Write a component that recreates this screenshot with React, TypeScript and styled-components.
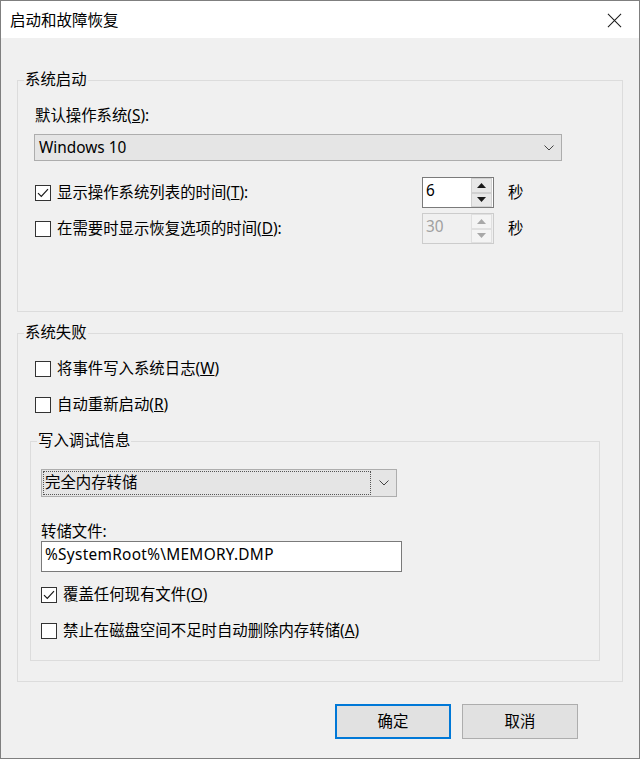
import styled, { createGlobalStyle, css } from "styled-components";

const GlobalStyle = createGlobalStyle`
    html, body {
        margin: 0;
        padding: 0;
        background: #f0f0f0;
    }
    * {
        box-sizing: border-box;
    }
`

const FONT = `"Noto Sans", "Noto Sans CJK SC", sans-serif`

export default function App() {
    return (
        <>
            <GlobalStyle />
            <Window>
                <TitleBar>
                    <Title>启动和故障恢复</Title>
                    <CloseIcon viewBox="0 0 16 16">
                        <path d="M1 1 L15 15 M15 1 L1 15" stroke="#1a1a1a" strokeWidth="1.1" fill="none" />
                    </CloseIcon>
                </TitleBar>
                <Body>
                    <GroupBox>
                        <Legend>系统启动</Legend>
                        <StartupContent>
                            <Label>默认操作系统(<u>S</u>):</Label>
                            <Combo $width={528} $height={27} $offset={-1}>
                                <ComboText>Windows 10</ComboText>
                                <Chevron />
                            </Combo>
                            <TimeRow>
                                <CheckLine $width={387}>
                                    <CheckBox checked />
                                    <span>显示操作系统列表的时间(<u>T</u>):</span>
                                </CheckLine>
                                <Spinner value="6" />
                                <Unit>秒</Unit>
                            </TimeRow>
                            <TimeRow $gap={5}>
                                <CheckLine $width={387}>
                                    <CheckBox />
                                    <span>在需要时显示恢复选项的时间(<u>D</u>):</span>
                                </CheckLine>
                                <Spinner value="30" disabled />
                                <Unit>秒</Unit>
                            </TimeRow>
                        </StartupContent>
                    </GroupBox>

                    <GroupBox $gap={11}>
                        <Legend>系统失败</Legend>
                        <FailureContent>
                            <CheckLine>
                                <CheckBox />
                                <span>将事件写入系统日志(<u>W</u>)</span>
                            </CheckLine>
                            <CheckLine $gap={16}>
                                <CheckBox />
                                <span>自动重新启动(<u>R</u>)</span>
                            </CheckLine>
                            <SubGroup>
                                <Legend>写入调试信息</Legend>
                                <DebugContent>
                                    <Combo $width={356} $height={28} $gap={0}>
                                        <FocusRect>完全内存转储</FocusRect>
                                        <Chevron />
                                    </Combo>
                                    <FileLabel>转储文件:</FileLabel>
                                    <TextInput>%SystemRoot%\MEMORY.DMP</TextInput>
                                    <CheckLine $gap={13}>
                                        <CheckBox checked />
                                        <span>覆盖任何现有文件(<u>O</u>)</span>
                                    </CheckLine>
                                    <CheckLine $gap={16}>
                                        <CheckBox />
                                        <span>禁止在磁盘空间不足时自动删除内存转储(<u>A</u>)</span>
                                    </CheckLine>
                                </DebugContent>
                            </SubGroup>
                        </FailureContent>
                    </GroupBox>
                </Body>
                <Footer>
                    <Button $primary>确定</Button>
                    <Button>取消</Button>
                </Footer>
            </Window>
        </>
    )
}

function CheckBox({ checked }: { checked?: boolean }) {
    return (
        <Box>
            {checked && (
                <svg width="14" height="14" viewBox="0 0 14 14">
                    <path d="M2 7.2 L5.3 10.5 L12 3.2" stroke="#1a1a1a" strokeWidth="1.2" fill="none" />
                </svg>
            )}
        </Box>
    )
}

function Spinner({ value, disabled }: { value: string; disabled?: boolean }) {
    const arrow = disabled ? "#a8a8a8" : "#1a1a1a"
    return (
        <SpinBox $disabled={disabled}>
            <SpinValue $disabled={disabled}>{value}</SpinValue>
            <SpinButtons>
                <SpinButton $disabled={disabled}>
                    <svg width="9" height="5" viewBox="0 0 9 5">
                        <path d="M0 5 L4.5 0 L9 5 Z" fill={arrow} />
                    </svg>
                </SpinButton>
                <SpinButton $disabled={disabled}>
                    <svg width="9" height="5" viewBox="0 0 9 5">
                        <path d="M0 0 L4.5 5 L9 0 Z" fill={arrow} />
                    </svg>
                </SpinButton>
            </SpinButtons>
        </SpinBox>
    )
}

function Chevron() {
    return (
        <ChevronBox>
            <svg width="10" height="6" viewBox="0 0 10 6">
                <path d="M0.5 0.5 L5 5 L9.5 0.5" stroke="#444" strokeWidth="1" fill="none" />
            </svg>
        </ChevronBox>
    )
}

const Window = styled.div`
    width: 640px;
    height: 759px;
    border: 1px solid #7f7f7f;
    background: #f0f0f0;
    display: flex;
    flex-direction: column;
    font-family: ${FONT};
    font-size: 15.4px;
    color: #000;
`
const TitleBar = styled.div`
    height: 37px;
    background: #fff;
    display: flex;
    align-items: center;
    justify-content: space-between;
    padding: 0 17px 0 9px;
    flex-shrink: 0;
`
const Title = styled.div`
    font-size: 15.5px;
    line-height: 20px;
`
const CloseIcon = styled.svg`
    width: 15px;
    height: 15px;
    margin-top: 1px;
`
const Body = styled.div`
    padding: 0 16px;
    margin-top: 32px;
`
const GroupBox = styled.fieldset<{ $gap?: number }>`
    margin: ${p => p.$gap ?? 0}px 0 0 0;
    padding: 0;
    min-width: 0;
    border: 1px solid #dcdcdc;
`
const SubGroup = styled(GroupBox)`
    margin: 16px 0 0 -5px;
    width: 570px;
`
const Legend = styled.legend`
    margin-left: 6px;
    padding: 0 1px;
    line-height: 20px;
`
const StartupContent = styled.div`
    padding: 16px 0 67px 17px;
    display: flex;
    flex-direction: column;
    align-items: flex-start;
`
const FailureContent = styled.div`
    padding: 16px 0 20px 17px;
    display: flex;
    flex-direction: column;
    align-items: flex-start;
`
const DebugContent = styled.div`
    padding: 18px 0 19px 10px;
    display: flex;
    flex-direction: column;
    align-items: flex-start;
`
const Label = styled.div`
    line-height: 20px;
`
const FileLabel = styled.div`
    line-height: 18px;
    margin-top: 26px;
`
const Combo = styled.div<{ $width: number; $height: number; $offset?: number; $gap?: number }>`
    width: ${p => p.$width}px;
    height: ${p => p.$height}px;
    margin-top: ${p => p.$gap ?? 8}px;
    margin-left: ${p => p.$offset ?? 0}px;
    background: #e5e5e5;
    border: 1px solid #adadad;
    display: flex;
    align-items: center;
    padding: 1px;
`
const ComboText = styled.div`
    flex: 1;
    padding-left: 3px;
    line-height: 20px;
`
const FocusRect = styled.div`
    flex: 1;
    align-self: stretch;
    border: 1px dotted #555;
    margin-right: 2px;
    display: flex;
    align-items: center;
    padding-left: 1px;
    line-height: 20px;
`
const ChevronBox = styled.div`
    width: 22px;
    display: flex;
    align-items: center;
    justify-content: center;
`
const TimeRow = styled.div<{ $gap?: number }>`
    display: flex;
    align-items: center;
    height: 31px;
    margin-top: ${p => p.$gap ?? 16}px;
`
const CheckLine = styled.div<{ $width?: number; $gap?: number }>`
    display: flex;
    align-items: center;
    gap: 6px;
    line-height: 20px;
    height: 20px;
    margin-top: ${p => p.$gap ?? 0}px;
    ${p => p.$width && css`
        width: ${p.$width}px;
        margin-top: 0;
    `}
`
const Box = styled.div`
    width: 16px;
    height: 16px;
    border: 1px solid #333;
    background: #fff;
    display: flex;
    align-items: center;
    justify-content: center;
    flex-shrink: 0;
`
const SpinBox = styled.div<{ $disabled?: boolean }>`
    width: 72px;
    height: 31px;
    border: 1px solid ${p => (p.$disabled ? "#cccccc" : "#7a7a7a")};
    background: ${p => (p.$disabled ? "#f0f0f0" : "#fff")};
    display: flex;
`
const SpinValue = styled.div<{ $disabled?: boolean }>`
    flex: 1;
    padding: 3px 0 0 3px;
    line-height: 20px;
    color: ${p => (p.$disabled ? "#a0a0a0" : "#000")};
`
const SpinButtons = styled.div`
    width: 22px;
    display: flex;
    flex-direction: column;
    padding: 0 1px 0 0;
`
const SpinButton = styled.div<{ $disabled?: boolean }>`
    flex: 1;
    display: flex;
    align-items: center;
    justify-content: center;
    background: ${p => (p.$disabled ? "#f4f4f4" : "#e8e8e8")};
    border: 1px solid ${p => (p.$disabled ? "#e0e0e0" : "#d0d0d0")};
`
const Unit = styled.span`
    margin-left: 14px;
    line-height: 20px;
`
const TextInput = styled.div`
    width: 361px;
    height: 31px;
    background: #fff;
    border: 1px solid #7a7a7a;
    padding: 3px 0 0 3px;
    line-height: 20px;
    letter-spacing: 0.3px;
`
const Footer = styled.div`
    display: flex;
    justify-content: flex-end;
    gap: 11px;
    padding-right: 61px;
    margin-top: 22px;
`
const Button = styled.div<{ $primary?: boolean }>`
    width: 116px;
    height: 35px;
    background: #e1e1e1;
    border: 1px solid ${p => (p.$primary ? "#0078d7" : "#adadad")};
    box-shadow: ${p => (p.$primary ? "inset 0 0 0 1px #0078d7" : "none")};
    display: flex;
    align-items: center;
    justify-content: center;
    line-height: 20px;
`
